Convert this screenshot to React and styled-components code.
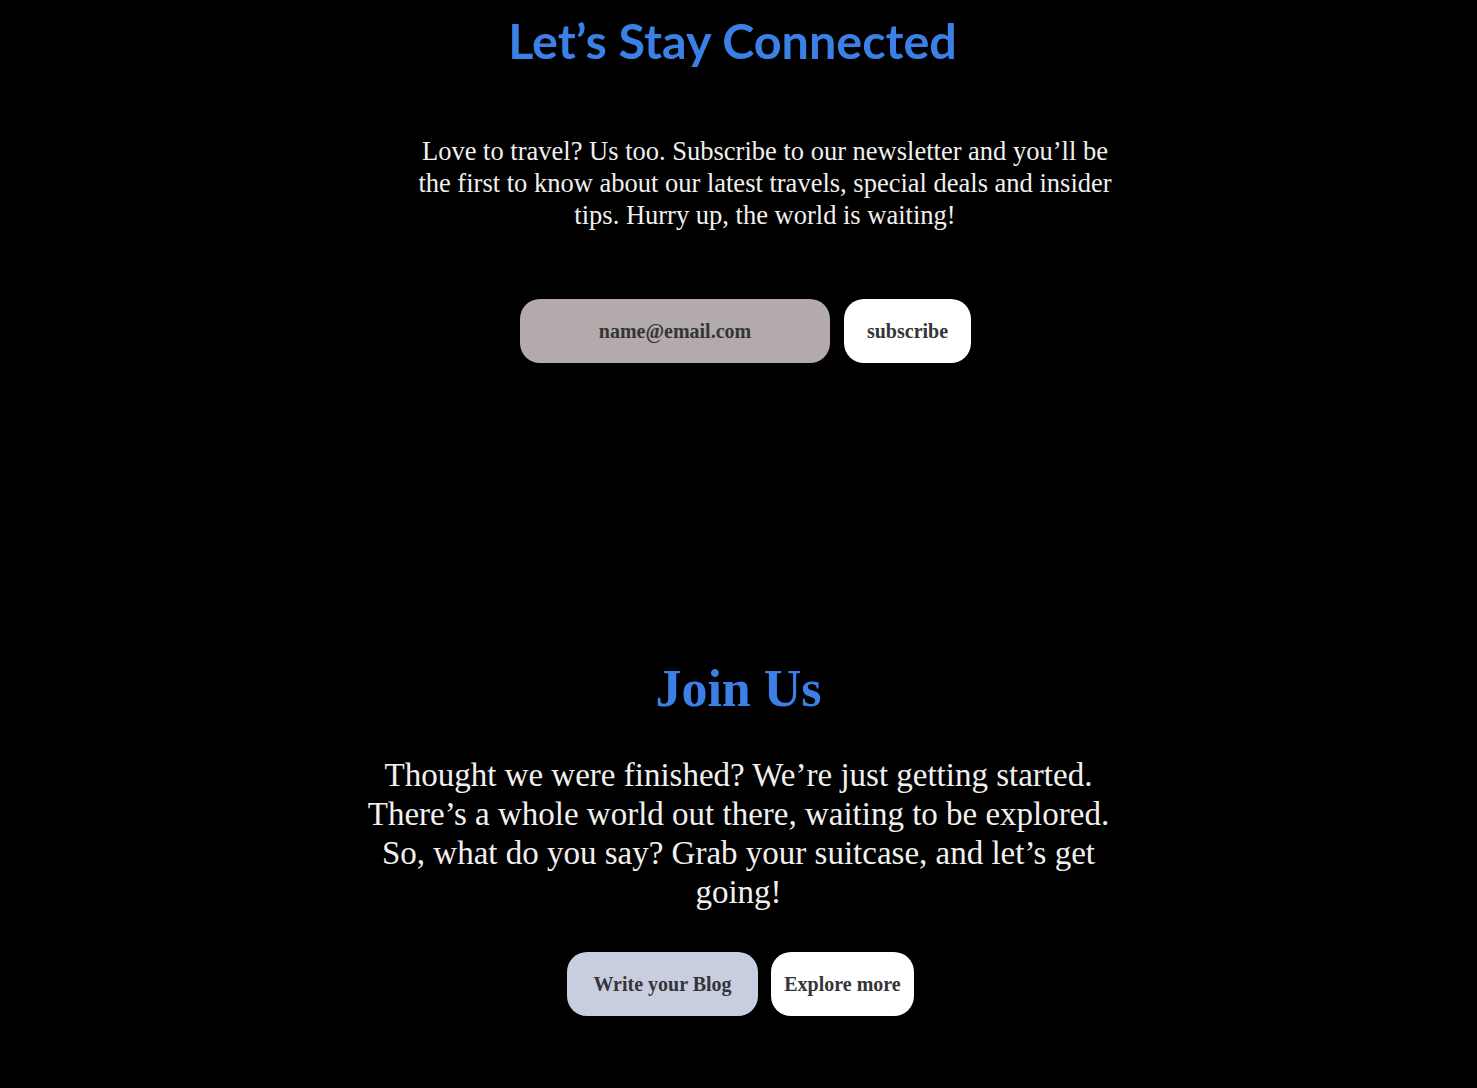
import React from "react";
import styled, { createGlobalStyle } from "styled-components";

const Global = createGlobalStyle`
  html, body { margin: 0; padding: 0; background: #000; }
  body { min-height: 1088px; }
`;

const Page = styled.main`
  display: flex;
  flex-direction: column;
  align-items: center;
  background: #000;
  min-height: 1088px;
`;

const Section = styled.section`
  display: flex;
  flex-direction: column;
  align-items: center;
  width: 100%;
  padding-top: ${(p) => p.$top}px;
`;

const Title = styled.h1`
  margin: 0;
  padding-right: 12px;
  font-family: Lato, "Open Sans", sans-serif;
  font-weight: 700;
  font-size: 48.5px;
  line-height: 58px;
  color: #3a80e6;
`;

const JoinTitle = styled.h2`
  margin: 0;
  font-family: "Liberation Serif", serif;
  font-weight: 700;
  font-size: 52px;
  line-height: 60px;
  color: #3a80e6;
`;

const Text = styled.p`
  margin: ${(p) => p.$mt}px 0 0;
  width: ${(p) => p.$w}px;
  padding-left: ${(p) => p.$shift || 0}px;
  text-align: center;
  font-family: "Liberation Serif", serif;
  font-size: ${(p) => p.$size}px;
  line-height: ${(p) => p.$lh}px;
  color: #f2f0ee;
`;

const Row = styled.div`
  display: flex;
  gap: ${(p) => p.$gap}px;
  margin-top: ${(p) => p.$mt}px;
  padding-left: ${(p) => p.$shift || 0}px;
`;

const Input = styled.input`
  box-sizing: border-box;
  width: 310px;
  height: 64px;
  border: none;
  border-radius: 20px;
  background: #b3aaab;
  text-align: center;
  font-family: "Liberation Serif", serif;
  font-weight: 700;
  font-size: 20px;
  color: #353537;
  outline: none;
  &::placeholder { color: #353537; }
`;

const Button = styled.button`
  box-sizing: border-box;
  width: ${(p) => p.$w}px;
  height: 64px;
  padding: 0;
  border: none;
  border-radius: 20px;
  background: ${(p) => p.$bg};
  font-family: "Liberation Serif", serif;
  font-weight: 700;
  font-size: 20px;
  color: #353538;
  cursor: pointer;
`;

export default function App() {
  return (
    <>
      <Global />
      <Page>
        <Section $top={11}>
          <Title>Let’s Stay Connected</Title>
          <Text $mt={66} $w={710} $shift={53} $size={26.5} $lh={32}>
            Love to travel? Us too. Subscribe to our newsletter and you’ll be the first to know about our latest travels, special deals and insider tips. Hurry up, the world is waiting!
          </Text>
          <Row $gap={14} $mt={68} $shift={14}>
            <Input placeholder="name@email.com" />
            <Button $w={127} $bg="#ffffff">subscribe</Button>
          </Row>
        </Section>
        <Section $top={296}>
          <JoinTitle>Join Us</JoinTitle>
          <Text $mt={37} $w={760} $size={33} $lh={39}>
            Thought we were finished? We’re just getting started. There’s a whole world out there, waiting to be explored. So, what do you say? Grab your suitcase, and let’s get going!
          </Text>
          <Row $gap={13} $mt={40} $shift={4}>
            <Button $w={191} $bg="#c9cde0">Write your Blog</Button>
            <Button $w={143} $bg="#ffffff">Explore more</Button>
          </Row>
        </Section>
      </Page>
    </>
  );
}
